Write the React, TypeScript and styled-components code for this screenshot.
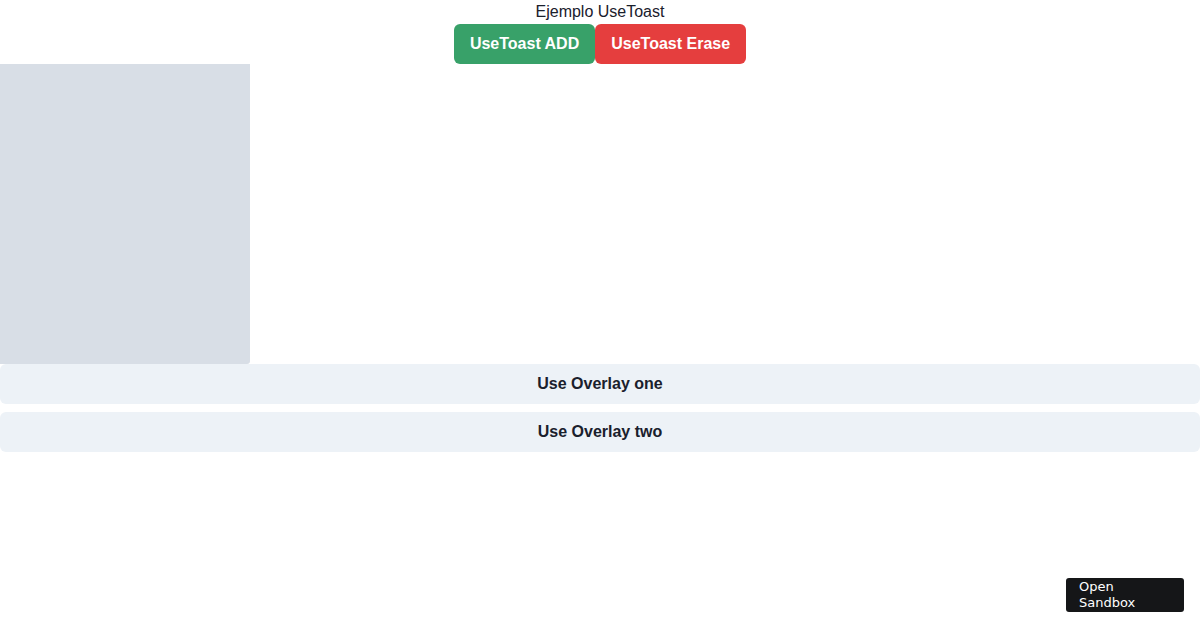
import React from "react";
import styled, { createGlobalStyle } from "styled-components";

const Global = createGlobalStyle`
  html, body { margin: 0; padding: 0; background: #fff; }
  body { font-family: "Liberation Sans", Arial, sans-serif; color: #1A202C; }
  * { box-sizing: border-box; }
`;

const Page = styled.div`
  display: flex;
  flex-direction: column;
  width: 1200px;
`;

const Title = styled.div`
  text-align: center;
  font-size: 16px;
  line-height: 24px;
`;

const ButtonRow = styled.div`
  display: flex;
  justify-content: center;
`;

const ActionButton = styled.button<{ $bg: string }>`
  height: 40px;
  padding: 0 16px;
  border: none;
  border-radius: 6px;
  background: ${(p) => p.$bg};
  color: #fff;
  font-family: "Liberation Sans", Arial, sans-serif;
  font-weight: 700;
  font-size: 16px;
  cursor: pointer;
`;

const Panel = styled.div`
  width: 250px;
  height: 300px;
  background: #D8DEE6;
  border-bottom-right-radius: 3px;
`;

const OverlayList = styled.div`
  display: flex;
  flex-direction: column;
  gap: 8px;
`;

const OverlayButton = styled.button`
  width: 100%;
  height: 40px;
  border: none;
  border-radius: 6px;
  background: #EDF2F7;
  color: #1A202C;
  font-family: "Liberation Sans", Arial, sans-serif;
  font-weight: 700;
  font-size: 16px;
  cursor: pointer;
`;

const SandboxLink = styled.a`
  position: fixed;
  left: 1066px;
  top: 578px;
  width: 118px;
  height: 34px;
  padding: 1px 13px;
  background: #151618;
  border-radius: 3px;
  color: #fff;
  font-family: "DejaVu Sans", sans-serif;
  font-size: 13px;
  line-height: 16px;
  text-decoration: none;
  overflow: hidden;
`;

export default function App() {
  return (
    <>
      <Global />
      <Page>
        <Title>Ejemplo UseToast</Title>
        <ButtonRow>
          <ActionButton $bg="#38A169">UseToast ADD</ActionButton>
          <ActionButton $bg="#E53E3E">UseToast Erase</ActionButton>
        </ButtonRow>
        <Panel />
        <OverlayList>
          <OverlayButton>Use Overlay one</OverlayButton>
          <OverlayButton>Use Overlay two</OverlayButton>
        </OverlayList>
      </Page>
      <SandboxLink href="#">
        Open
        <br />
        Sandbox
      </SandboxLink>
    </>
  );
}
